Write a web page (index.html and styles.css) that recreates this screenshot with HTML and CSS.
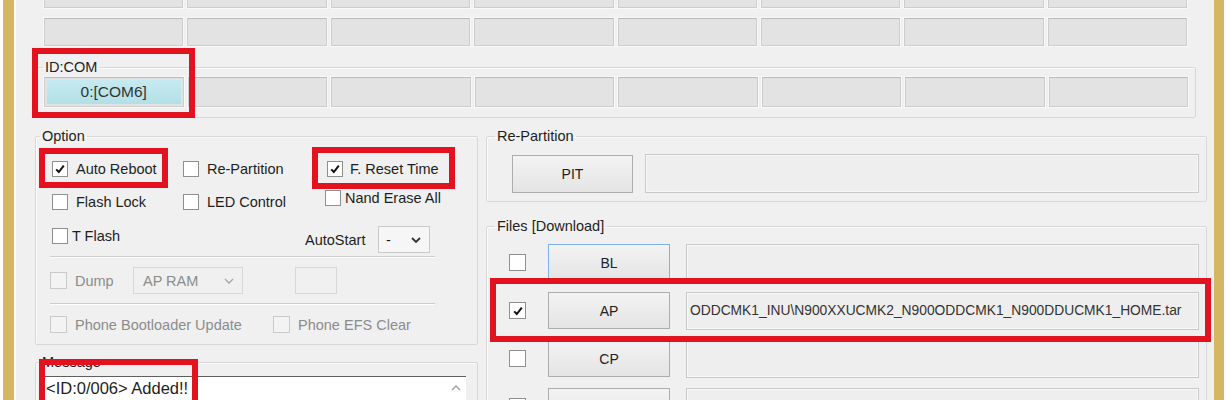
FILE: index.html
```html
<!DOCTYPE html>
<html>

<head>
  <title>Odin3</title>
  <meta name="viewport" content="width=device-width, initial-scale=1.0">
  <link rel="stylesheet" href="styles.css">
</head>

<body>
  <div class="screen">
    <div class="window">
      <div class="panel">
        <div class="ports ports-top">
          <div class="cell"></div><div class="cell"></div><div class="cell"></div><div class="cell"></div>
          <div class="cell"></div><div class="cell"></div><div class="cell"></div><div class="cell"></div>
        </div>
        <div class="ports ports-mid">
          <div class="cell"></div><div class="cell"></div><div class="cell"></div><div class="cell"></div>
          <div class="cell"></div><div class="cell"></div><div class="cell"></div><div class="cell"></div>
        </div>

        <fieldset class="group idcom">
          <legend>ID:COM</legend>
          <div class="idcom-body">
            <div class="ports ports-com">
              <div class="cell active">0:[COM6]</div><div class="cell"></div><div class="cell"></div><div class="cell"></div>
              <div class="cell"></div><div class="cell"></div><div class="cell"></div><div class="cell"></div>
            </div>
          </div>
        </fieldset>

        <div class="lower">
          <div class="left-col">
            <fieldset class="group option">
              <legend>Option</legend>
              <div class="opt-body">
                <div class="opt-row">
                  <label class="item c1"><span class="cb"><svg viewBox="0 0 12 12"><polyline points="2.2,6.4 4.8,9 9.8,2.6"/></svg></span>Auto Reboot</label>
                  <label class="item c2"><span class="cb"></span>Re-Partition</label>
                  <label class="item c3"><span class="cb"><svg viewBox="0 0 12 12"><polyline points="2.2,6.4 4.8,9 9.8,2.6"/></svg></span>F. Reset Time</label>
                </div>
                <div class="opt-row">
                  <label class="item c1"><span class="cb"></span>Flash Lock</label>
                  <label class="item c2"><span class="cb"></span>LED Control</label>
                  <label class="item nand"><span class="cb"></span>Nand Erase All</label>
                </div>
                <div class="opt-row row-auto">
                  <label class="item c1 tight"><span class="cb"></span>T Flash</label>
                  <div class="autostart">
                    <span class="auto-label">AutoStart</span>
                    <div class="select small"><span>-</span><svg viewBox="0 0 10 6"><polyline points="1,1 5,5 9,1"/></svg></div>
                  </div>
                </div>
                <div class="sep sep-first"></div>
                <div class="opt-row row-dump">
                  <label class="item dis dump"><span class="cb"></span>Dump</label>
                  <div class="select ram"><span>AP RAM</span><svg viewBox="0 0 10 6"><polyline points="1,1 5,5 9,1"/></svg></div>
                  <div class="blank-box"></div>
                </div>
                <div class="sep"></div>
                <div class="opt-row row-phone">
                  <label class="item dis boot"><span class="cb"></span>Phone Bootloader Update</label>
                  <label class="item dis"><span class="cb"></span>Phone EFS Clear</label>
                </div>
              </div>
            </fieldset>

            <fieldset class="group message">
              <legend>Message</legend>
              <div class="msg-body">
                <div class="log">
                  <div class="log-text">&lt;ID:0/006&gt; Added!!</div>
                  <div class="log-scroll"><svg viewBox="0 0 10 6"><polyline points="1,5 5,1 9,5"/></svg></div>
                </div>
              </div>
            </fieldset>
          </div>

          <div class="right-col">
            <fieldset class="group repart">
              <legend>Re-Partition</legend>
              <div class="repart-body">
                <button class="btn pit">PIT</button>
                <div class="field"></div>
              </div>
            </fieldset>

            <fieldset class="group files">
              <legend>Files [Download]</legend>
              <div class="files-body">
                <div class="file-row">
                  <span class="cb big"></span>
                  <button class="btn focus">BL</button>
                  <div class="field"></div>
                </div>
                <div class="file-row">
                  <span class="cb big"><svg viewBox="0 0 12 12"><polyline points="2.2,6.4 4.8,9 9.8,2.6"/></svg></span>
                  <button class="btn">AP</button>
                  <div class="field path">ODDCMK1_INU\N900XXUCMK2_N900ODDCMK1_N900DDUCMK1_HOME.tar</div>
                </div>
                <div class="file-row">
                  <span class="cb big"></span>
                  <button class="btn">CP</button>
                  <div class="field"></div>
                </div>
                <div class="file-row">
                  <span class="cb big"></span>
                  <button class="btn"></button>
                  <div class="field"></div>
                </div>
              </div>
            </fieldset>
          </div>
        </div>
      </div>
    </div>

    <!-- red annotation frames -->
    <div class="mark mark-com"></div>
    <div class="mark mark-reboot"></div>
    <div class="mark mark-reset"></div>
    <div class="mark mark-msg"></div>
    <div class="mark mark-ap"></div>
  </div>
</body>

</html>
```

FILE: styles.css
```css
body {
  margin: 0;
  background: #fff;
  font-family: "Liberation Sans", Arial, sans-serif;
  font-size: 14.5px;
  color: #1e1e1e;
}

.screen {
  position: relative;
  width: 1230px;
  height: 400px;
  overflow: hidden;
}

.window {
  margin-left: 3px;
  width: 1221px;
  height: 400px;
  box-sizing: border-box;
  border-left: 11px solid #d5b761;
  border-right: 10px solid #d5b761;
}

.panel {
  height: 400px;
  background-color: #f0f0f0;
  box-shadow: inset 2px 0 #fafafa;
  overflow: hidden;
}

/* port grid */
.ports {
  display: grid;
  grid-template-columns: repeat(8, 1fr);
  gap: 4px;
  height: 28px;
  margin: 0 27px 0 30px;
}

.ports-top {
  margin-top: -20px;
}

.ports-mid {
  margin-top: 10px;
}

.ports-com {
  height: 30px;
  margin: 0;
}

.cell {
  background-color: #e3e3e3;
  border: 1px solid #cdcdcd;
  border-top-color: #b9b9b9;
  box-shadow: 0 0 0 1px #f9f9f9;
}

.cell.active {
  padding: 2px;
  background: linear-gradient(#c6eaf0, #b2e0e6) content-box, #e3e3e3;
  display: flex;
  align-items: center;
  justify-content: center;
  color: #333;
  font-size: 15.5px;
}

/* group boxes */
.group {
  margin: 0;
  padding: 0;
  min-width: 0;
  border: 1px solid #d8d8d8;
  border-radius: 2px;
  box-shadow: inset 1px 1px 0 #fbfbfb;
}

.group legend {
  margin-left: 4px;
  padding: 0 2px;
  line-height: 16px;
  font-size: 14.5px;
}

.idcom {
  margin: 13px 18px 0 22px;
}

.idcom legend {
  margin-left: 6px;
}

.idcom-body {
  padding: 2px 7px 10px 7px;
}

.lower {
  display: flex;
  gap: 8px;
  margin: 10px 7px 0 21px;
}

.left-col {
  width: 443px;
  flex: none;
}

.right-col {
  flex: 1;
}

/* option box */
.opt-body {
  padding: 8px 0 0 16px;
}

.opt-row {
  display: flex;
  align-items: center;
  height: 33px;
}

.row-auto {
  height: 36px;
}

.row-dump {
  height: 45px;
}

.row-phone {
  height: 39px;
}

.item {
  display: flex;
  align-items: center;
  gap: 8px;
  white-space: nowrap;
}

.c1 {
  width: 131px;
}

.c2 {
  width: 144px;
}

.c3 {
  gap: 7px;
}

.tight {
  gap: 4px;
}

.nand {
  gap: 4px;
  margin-left: -2px;
  align-self: flex-start;
  margin-top: 5px;
}

.cb {
  width: 16px;
  height: 16px;
  box-sizing: border-box;
  border: 1px solid #8e8f8f;
  background: #fff;
  display: inline-flex;
  align-items: center;
  justify-content: center;
  flex: none;
}

.cb svg {
  width: 12px;
  height: 12px;
  fill: none;
  stroke: #111;
  stroke-width: 2;
}

.cb.big {
  width: 17px;
  height: 17px;
}

.dis {
  color: #8c8c8c;
}

.dis .cb {
  width: 17px;
  height: 17px;
  border-color: #cacaca;
  background: #f3f3f3;
}

.dump {
  width: 83px;
  margin-left: -2px;
}

.boot {
  width: 223px;
  margin-left: -2px;
}

.autostart {
  display: flex;
  align-items: center;
  margin-left: 122px;
  align-self: flex-end;
  margin-bottom: 1px;
}

.auto-label {
  width: 73px;
}

.select {
  box-sizing: border-box;
  height: 27px;
  border: 1px solid #c9c9c9;
  background: #f6f6f6;
  display: flex;
  align-items: center;
  justify-content: space-between;
  padding: 0 8px 0 7px;
}

.select svg {
  width: 10px;
  height: 6px;
  fill: none;
  stroke: #333;
  stroke-width: 1.8;
}

.select.small {
  width: 52px;
}

.select.ram {
  width: 110px;
  padding-left: 9px;
  color: #8c8c8c;
  border-color: #d8d8d8;
  background: #f0f0f0;
}

.select.ram svg {
  stroke: #a5a5a5;
  stroke-width: 1.3;
}

.blank-box {
  width: 42px;
  height: 27px;
  box-sizing: border-box;
  margin-left: 52px;
  border: 1px solid #d8d8d8;
}

.sep {
  width: 385px;
  height: 0;
  margin-left: -2px;
  border-top: 1px solid #cdcdcd;
  border-bottom: 1px solid #fdfdfd;
}

.sep-first {
  margin-top: 2px;
}

/* message box */
.message {
  margin-top: 9px;
  height: 80px;
}

.msg-body {
  padding: 6px 11px 0 6px;
}

.log {
  display: flex;
  height: 60px;
  background: #fff;
  border-top: 1px solid #5f5f5f;
  border-left: 1px solid #8a8a8a;
}

.log-text {
  flex: 1;
  padding: 1px 0 0 3px;
  line-height: 20px;
  font-size: 16.5px;
}

.log-scroll {
  width: 20px;
  display: flex;
  justify-content: center;
  padding-top: 8px;
}

.log-scroll svg {
  width: 10px;
  height: 6px;
  fill: none;
  stroke: #a6a6a6;
  stroke-width: 1.5;
}

/* right column */
.right-col .group legend {
  margin-left: 8px;
}

.repart-body {
  display: flex;
  align-items: center;
  gap: 12px;
  padding: 10px 7px 8px 25px;
}

.btn {
  font-family: "Liberation Sans", Arial, sans-serif;
  font-size: 14px;
  color: #222;
  box-sizing: border-box;
  width: 122px;
  height: 37px;
  padding: 0;
  border: 1px solid #adadad;
  border-radius: 0;
  background: linear-gradient(#f3f3f3, #e4e4e4);
  flex: none;
}

.btn.pit {
  width: 121px;
  height: 38px;
}

.btn.focus {
  border-color: #7db2e6;
}

.field {
  flex: 1;
  height: 39px;
  box-sizing: border-box;
  background: #eeeeee;
  border: 1px solid #c9c9c9;
  box-shadow: inset 0 0 0 1px #f8f8f8;
}

.files {
  margin-top: 16px;
  height: 200px;
}

.files-body {
  padding: 10px 7px 0 22px;
}

.file-row {
  display: flex;
  align-items: center;
  height: 37px;
  margin-bottom: 11px;
}

.file-row .cb {
  margin-right: 22px;
}

.file-row .field {
  height: 38px;
  margin-left: 16px;
}

.field.path {
  display: flex;
  align-items: center;
  overflow: hidden;
  white-space: nowrap;
  padding-left: 3px;
  font-size: 13.8px;
  color: #333;
}

/* red annotation frames */
.mark {
  position: absolute;
  box-sizing: border-box;
  border: 6px solid #e2131e;
}

.mark-com {
  left: 32px;
  top: 48px;
  width: 163px;
  height: 70px;
}

.mark-reboot {
  left: 39px;
  top: 148px;
  width: 129px;
  height: 40px;
}

.mark-reset {
  left: 312px;
  top: 147px;
  width: 143px;
  height: 42px;
}

.mark-msg {
  left: 39px;
  top: 359px;
  width: 159px;
  height: 60px;
}

.mark-ap {
  left: 490px;
  top: 278px;
  width: 721px;
  height: 64px;
}
```
